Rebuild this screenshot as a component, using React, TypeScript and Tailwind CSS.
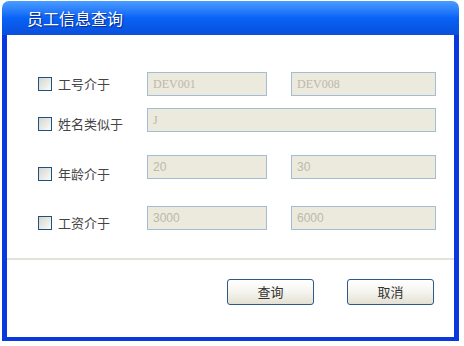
import React from 'react';

const cjk = { fontFamily: '"Noto Sans CJK SC", "Liberation Sans", sans-serif' };

type Row = {
  label: string;
  values: string[];
  serif?: boolean;
  rowClass: string;
  labelClass: string;
};

const rows: Row[] = [
  { label: '工号介于', values: ['DEV001', 'DEV008'], serif: true, rowClass: 'mt-0', labelClass: 'mt-[5px]' },
  { label: '姓名类似于', values: ['J'], serif: true, rowClass: 'mt-[12px]', labelClass: 'mt-[9px]' },
  { label: '年龄介于', values: ['20', '30'], rowClass: 'mt-[23px]', labelClass: 'mt-[12px]' },
  { label: '工资介于', values: ['3000', '6000'], rowClass: 'mt-[25px]', labelClass: 'mt-[10px]' },
];

function CheckBox() {
  return (
    <span className="block h-[14px] w-[14px] shrink-0 border border-[#1c5180] bg-gradient-to-br from-[#d6d5cc] to-[#fbfbf9]" />
  );
}

function Field({ value, serif, className }: { value: string; serif?: boolean; className: string }) {
  return (
    <input
      readOnly
      value={value}
      className={`h-[24px] border border-[#a5bcd6] bg-[#ece9dd] pl-[5px] text-[12px] text-[#bcb8aa] outline-none ${className}`}
      style={{ fontFamily: serif ? '"Liberation Serif", serif' : '"Liberation Sans", sans-serif' }}
    />
  );
}

function XpButton({ children }: { children: React.ReactNode }) {
  return (
    <button
      className="h-[26px] w-[87px] rounded-[3px] border border-[#2d5a88] bg-gradient-to-b from-[#ffffff] via-[#f5f4ef] to-[#e3e0d3] text-[13px] text-[#333]"
      style={cjk}
    >
      {children}
    </button>
  );
}

export default function App() {
  return (
    <div className="h-[346px] w-[464px] bg-white pl-[2px] pt-[1px]">
      <div className="flex h-[340px] w-[457px] flex-col">
        <div className="flex h-[34px] items-center rounded-t-[7px] bg-gradient-to-b from-[#4b9cff] via-[#0862f6] to-[#0a4fdc] pl-[25px]">
          <span
            className="text-[16px] text-white"
            style={{ ...cjk, textShadow: '1px 1px 1px #0b2a8a' }}
          >
            员工信息查询
          </span>
        </div>
        <div className="flex flex-1 flex-col border-x-[5px] border-b-[4px] border-[#0a38df] bg-white">
          <div className="flex flex-col pl-[31px] pt-[37px]">
            {rows.map((r) => (
              <div key={r.label} className={`flex items-start ${r.rowClass}`}>
                <div className={`flex w-[109px] items-center gap-[6px] ${r.labelClass}`}>
                  <CheckBox />
                  <span className="text-[13px] leading-[14px] text-[#444]" style={cjk}>
                    {r.label}
                  </span>
                </div>
                {r.values.length === 2 ? (
                  <div className="flex gap-[24px]">
                    <Field value={r.values[0]} serif={r.serif} className="w-[120px]" />
                    <Field value={r.values[1]} serif={r.serif} className="w-[145px]" />
                  </div>
                ) : (
                  <Field value={r.values[0]} serif={r.serif} className="w-[289px]" />
                )}
              </div>
            ))}
          </div>
          <div className="mt-[28px] h-[2px] bg-[#e4e2d8]" />
          <div className="mt-[19px] flex gap-[33px] pl-[220px]">
            <XpButton>查询</XpButton>
            <XpButton>取消</XpButton>
          </div>
        </div>
      </div>
    </div>
  );
}
